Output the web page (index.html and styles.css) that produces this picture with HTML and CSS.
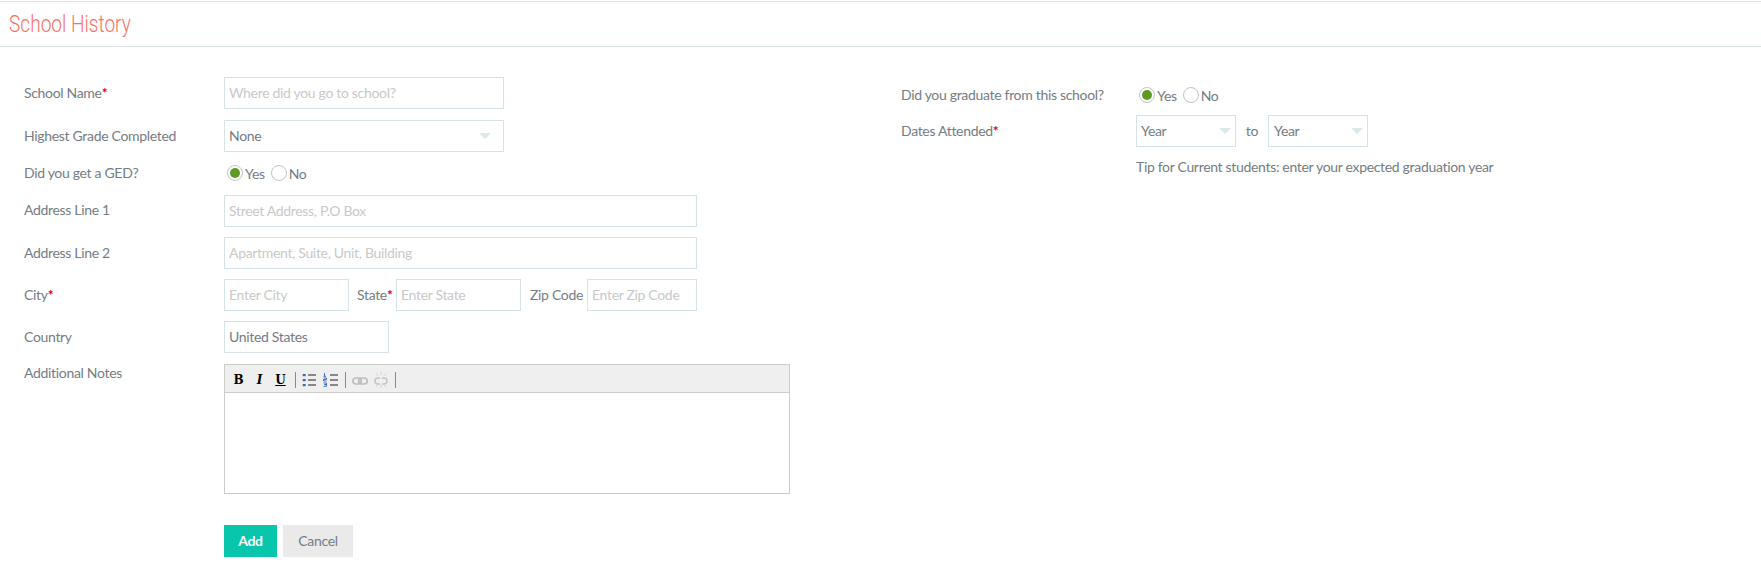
FILE: index.html
```html
<!DOCTYPE html>
<html lang="en">
<head>
<meta charset="utf-8">
<title>School History</title>
<link rel="stylesheet" href="styles.css">
</head>
<body>
<header class="page-head"><h1>School History</h1></header>
<form class="form">
  <div class="col-left">
    <div class="row row-wide">
      <label class="lbl">School Name<b>*</b></label>
      <input class="field w-280" placeholder="Where did you go to school?">
    </div>
    <div class="row row-wide">
      <label class="lbl">Highest Grade Completed</label>
      <div class="select w-280"><span>None</span></div>
    </div>
    <div class="row row-radio">
      <label class="lbl">Did you get a GED?</label>
      <div class="radios">
        <span class="radio on"></span><span class="opt">Yes</span>
        <span class="radio"></span><span class="opt">No</span>
      </div>
    </div>
    <div class="row">
      <label class="lbl lbl-up">Address Line 1</label>
      <input class="field w-473" placeholder="Street Address, P.O Box">
    </div>
    <div class="row">
      <label class="lbl">Address Line 2</label>
      <input class="field w-473" placeholder="Apartment, Suite, Unit, Building">
    </div>
    <div class="row">
      <label class="lbl">City<b>*</b></label>
      <input class="field w-125" placeholder="Enter City">
      <label class="inline-a">State<b>*</b></label>
      <input class="field w-125" placeholder="Enter State">
      <label class="inline-b">Zip Code</label>
      <input class="field w-110" placeholder="Enter Zip Code">
    </div>
    <div class="row row-wide">
      <label class="lbl">Country</label>
      <input class="field w-165" value="United States">
    </div>
    <div class="row row-editor">
      <label class="lbl lbl-top">Additional Notes</label>
      <div class="editor">
        <div class="toolbar">
          <span class="tb tb-b">B</span>
          <span class="tb tb-i">I</span>
          <span class="tb tb-u">U</span>
          <span class="sep"></span>
          <svg class="ico" viewBox="0 0 21 16" width="21" height="16"><g fill="#3f6cb0"><rect x="3.700" y="2" width="3" height="2.200"/><rect x="3.700" y="7" width="3" height="2.200"/><rect x="3.700" y="12" width="3" height="2.200"/></g><g fill="#222"><rect x="9" y="2.500" width="8" height="1"/><rect x="9" y="7.500" width="8" height="1"/><rect x="9" y="12.500" width="8" height="1"/></g></svg>
          <svg class="ico" viewBox="0 0 21 16" width="21" height="16"><g fill="none" stroke="#2f62c4" stroke-width=".9"><path d="M4.500 1v3.200M3.500 4.300h2.500"/><path d="M3.500 6h3v1.500h-3v1.500h3"/><path d="M3.500 11h3v1.500h-2h2v1.800h-3"/></g><g fill="#222"><rect x="10" y="2.500" width="8" height="1"/><rect x="10" y="7.500" width="8" height="1"/><rect x="10" y="12.500" width="8" height="1"/></g></svg>
          <span class="sep"></span>
          <svg class="ico" viewBox="0 0 21 16" width="21" height="16"><g fill="none" stroke="#bdbdbd" stroke-width="1.700"><rect x="3.800" y="6" width="8.500" height="6" rx="3"/><rect x="9.700" y="6" width="8.500" height="6" rx="3"/></g></svg>
          <svg class="ico" viewBox="0 0 21 16" width="21" height="16"><g fill="none" stroke="#c4c4c4" stroke-width="1.500"><path d="M10 6H8a3 3 0 0 0 0 6h2"/><path d="M12 6h2a3 3 0 0 1 0 6h-2"/></g><g stroke="#cfcfcf" stroke-width=".8"><path d="M11 0v3.500M6 1l2 3M16 1l-2 3M11 12.500V16M6 15l2-3M16 15l-2-3"/></g></svg>
          <span class="sep"></span>
        </div>
        <div class="editor-body"></div>
      </div>
    </div>
    <div class="actions">
      <button type="button" class="btn btn-add">Add</button>
      <button type="button" class="btn btn-cancel">Cancel</button>
    </div>
  </div>
  <div class="col-right">
    <div class="r-row r-grad">
      <label class="r-lbl">Did you graduate from this school?</label>
      <div class="radios">
        <span class="radio on"></span><span class="opt">Yes</span>
        <span class="radio"></span><span class="opt">No</span>
      </div>
    </div>
    <div class="r-row r-dates">
      <label class="r-lbl">Dates Attended<b>*</b></label>
      <div class="select w-100 narrow"><span>Year</span></div>
      <span class="to">to</span>
      <div class="select w-100 narrow second"><span>Year</span></div>
    </div>
    <p class="tip">Tip for Current students: enter your expected graduation year</p>
  </div>
</form>
</body>
</html>
```

FILE: styles.css
```css
* { box-sizing: border-box; }
html, body { margin: 0; padding: 0; background: #fff; }
body {
  font-family: "Lato", "Noto Sans", sans-serif;
  font-size: 14px;
  letter-spacing: -0.32px;
  color: #757c84;
  height: 572px;
  overflow: hidden;
}
.page-head {
  height: 46px;
  margin-top: 1px;
  border-top: 1px solid #d9e4e7;
  border-bottom: 1px solid #d9e4e7;
  padding-left: 9px;
}
.page-head h1 {
  margin: 0;
  font-family: "Roboto", sans-serif;
  font-weight: 300;
  font-size: 23px;
  letter-spacing: 0;
  line-height: 45px;
  color: #fb6f64;
  transform: scaleX(0.83);
  transform-origin: left center;
}
.form { display: flex; align-items: flex-start; padding-left: 24px; }
.col-left { width: 877px; padding-top: 30px; flex: none; }
.col-right { padding-top: 38px; }
.row { display: flex; align-items: center; height: 32px; margin-bottom: 10px; }
.row-wide { margin-bottom: 11px; }
.row-radio { height: 20px; margin-bottom: 12px; }
.lbl { width: 200px; flex: none; padding-bottom: 2px; }
.lbl-up { padding-bottom: 4px; }
b { color: #e00012; font-weight: 700; }
.field, .select {
  height: 32px;
  border: 1px solid #d3e3e6;
  background: #fff;
  font: inherit;
  letter-spacing: inherit;
  color: #757c84;
  padding: 0 4px 2px;
  outline: none;
  border-radius: 0;
}
.field::placeholder { color: #c9c9c9; opacity: 1; }
.w-280 { width: 280px; }
.w-473 { width: 473px; }
.w-125 { width: 125px; flex: none; }
.w-110 { width: 110px; flex: none; }
.w-165 { width: 165px; }
.w-100 { width: 100px; flex: none; }
.inline-a { margin-left: 8px; width: 39px; flex: none; padding-bottom: 2px; }
.inline-b { margin-left: 9px; width: 57px; flex: none; padding-bottom: 2px; }
.select { display: flex; align-items: center; position: relative; }
.select::after {
  content: "";
  position: absolute;
  right: 12px;
  top: 12px;
  border-left: 6px solid transparent;
  border-right: 6px solid transparent;
  border-top: 6px solid #dbe8ec;
}
.narrow::after { right: 4px; }
.second { padding-left: 5px; }
.radios { display: flex; align-items: center; padding-left: 3px; }
.radio {
  width: 16px; height: 16px; border-radius: 50%;
  border: 1px solid #c4c4c4; background: #fff; flex: none; position: relative;
}
.radio.on::after {
  content: ""; position: absolute; left: 2px; top: 2px;
  width: 10px; height: 10px; border-radius: 50%; background: #5f9a24;
}
.opt { margin: 0 6px 0 2px; }
.row-editor { align-items: flex-start; height: 130px; margin-top: 11px; margin-bottom: 31px; }
.lbl-top { margin-top: 0; }
.editor { width: 566px; height: 130px; border: 1px solid #ccc; display: flex; flex-direction: column; }
.toolbar {
  height: 28px; flex: none; background: #efefef; border-bottom: 1px solid #ccc;
  display: flex; align-items: center; padding: 2px 0 0 3px;
}
.tb { font-family: "DejaVu Serif", serif; font-size: 12px; font-weight: 700; letter-spacing: 0; color: #000; width: 21px; text-align: center; }
.tb-i { font-style: italic; }
.tb-u { text-decoration: underline; }
.sep { width: 1px; height: 16px; background: #8a8a8a; margin: 0 3px 0 4px; flex: none; }
.ico { flex: none; }
.editor-body { flex: 1; background: #fff; }
.actions { display: flex; gap: 6px; margin-left: 200px; }
.btn { height: 32px; border: 0; font: inherit; letter-spacing: inherit; padding: 0 0 2px; border-radius: 0; }
.btn-add { width: 53px; background: #07c6ac; color: #fff; font-weight: 700; }
.btn-cancel { width: 70px; background: #eaeaea; color: #757c84; }
.r-row { display: flex; align-items: center; }
.r-lbl { width: 235px; flex: none; padding-bottom: 2px; }
.r-grad { height: 20px; margin-bottom: 10px; }
.r-dates { height: 32px; }
.to { width: 32px; text-align: center; padding-bottom: 2px; }
.tip { margin: 10px 0 0 235px; line-height: 20px; }
```
